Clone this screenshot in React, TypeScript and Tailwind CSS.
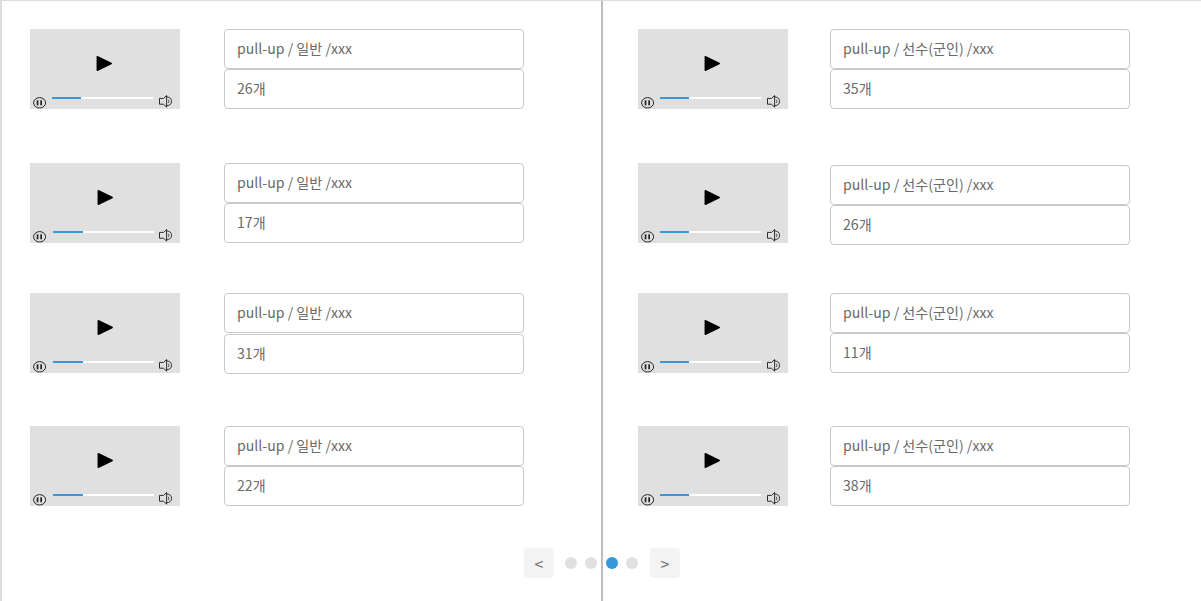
const fontCls = "font-['Noto_Sans_CJK_KR','Noto_Sans',sans-serif]";

function Video({ shifted }: { shifted?: boolean }) {
  return (
    <div className="relative h-20 w-[150px] shrink-0 bg-[#e0e0e0]">
      <svg
        className={shifted ? "absolute left-[67px] top-[26px]" : "absolute left-[66px] top-[26px]"}
        width="17"
        height="17"
        viewBox="0 0 17 17"
      >
        <path d="M1.3 1.8 L15.2 8.5 L1.3 15.2 Z" fill="#000" stroke="#000" strokeWidth="1.5" strokeLinejoin="round" />
      </svg>
      <svg className="absolute left-[3px] top-[67px]" width="14" height="14" viewBox="0 0 14 14">
        <ellipse cx="6.6" cy="6.8" rx="6" ry="5.2" fill="none" stroke="#222" strokeWidth="1" />
        <rect x="3.7" y="4.3" width="1.7" height="5" fill="#222" />
        <rect x="7.3" y="4.3" width="1.7" height="5" fill="#222" />
      </svg>
      <div
        className={
          shifted
            ? "absolute left-[23px] top-[68px] h-[2px] w-[101px] bg-white"
            : "absolute left-[22px] top-[68px] h-[2px] w-[101px] bg-white"
        }
      >
        <div className={shifted ? "h-full w-[30px] bg-[#3498db]" : "h-full w-[29px] bg-[#3498db]"} />
      </div>
      <svg className="absolute left-[129px] top-[66px]" width="14" height="14" viewBox="0 0 14 14">
        <path
          d="M0.5 3.4 H4.6 L7.6 0.5 V12.2 L4.6 9.2 H0.5 Z"
          fill="none"
          stroke="#222"
          strokeWidth="0.95"
          strokeLinejoin="round"
        />
        <path d="M7.6 1.8 Q12.6 2.4 12.6 6.3 Q12.6 10.2 7.6 10.8" fill="none" stroke="#222" strokeWidth="0.9" />
        <path d="M9.3 4.8 Q10.8 6.3 9.3 7.9" fill="none" stroke="#222" strokeWidth="0.8" />
      </svg>
    </div>
  );
}

function Field({ children }: { children: React.ReactNode }) {
  return (
    <div className="flex h-10 w-[300px] items-center rounded border border-[#c8c8c8] bg-white pb-px pl-3 text-[14.1px] text-[#6a6a6a]">
      {children}
    </div>
  );
}

const left = [
  { n: "26개", row: "", second: "", shifted: false },
  { n: "17개", row: "mt-[54px]", second: "", shifted: true },
  { n: "31개", row: "mt-[50px]", second: "mt-px", shifted: true },
  { n: "22개", row: "mt-[52px]", second: "", shifted: true },
];

const right = [
  { n: "35개", row: "", inputs: "" },
  { n: "26개", row: "mt-[54px]", inputs: "mt-[2px]" },
  { n: "11개", row: "mt-[48px]", inputs: "" },
  { n: "38개", row: "mt-[53px]", inputs: "" },
];

export default function App() {
  return (
    <div className={`relative flex h-[601px] w-[1201px] overflow-hidden border-t border-[#dcdcdc] bg-white ${fontCls}`}>
      <div className="h-full w-[601px] border-l-2 border-[#dcdcdc] pl-[28px] pt-[28px]">
        {left.map((r, i) => (
          <div key={i} className={`flex items-start gap-[44px] ${r.row}`}>
            <Video shifted={r.shifted} />
            <div>
              <Field>pull-up / 일반 /xxx</Field>
              <div className={r.second}>
                <Field>{r.n}</Field>
              </div>
            </div>
          </div>
        ))}
      </div>
      <div className="h-full w-[600px] border-l-2 border-[#bdbdbd] pl-[35px] pt-[28px]">
        {right.map((r, i) => (
          <div key={i} className={`flex items-start gap-[42px] ${r.row}`}>
            <Video />
            <div className={r.inputs}>
              <Field>pull-up / 선수(군인) /xxx</Field>
              <Field>{r.n}</Field>
            </div>
          </div>
        ))}
      </div>
      <div className="absolute left-[524px] top-[547px] flex items-center">
        <div className="flex h-[30px] w-[30px] items-center justify-center rounded bg-[#f3f3f3] text-[16px] text-[#777]">&lt;</div>
        <div className="ml-[11px] h-3 w-3 rounded-full bg-[#e0e0e0]" />
        <div className="ml-2 h-3 w-3 rounded-full bg-[#e0e0e0]" />
        <div className="ml-[9px] h-3 w-3 rounded-full bg-[#3498db]" />
        <div className="ml-2 h-3 w-3 rounded-full bg-[#e0e0e0]" />
        <div className="ml-3 flex h-[30px] w-[30px] items-center justify-center rounded bg-[#f3f3f3] text-[16px] text-[#777]">&gt;</div>
      </div>
    </div>
  );
}
